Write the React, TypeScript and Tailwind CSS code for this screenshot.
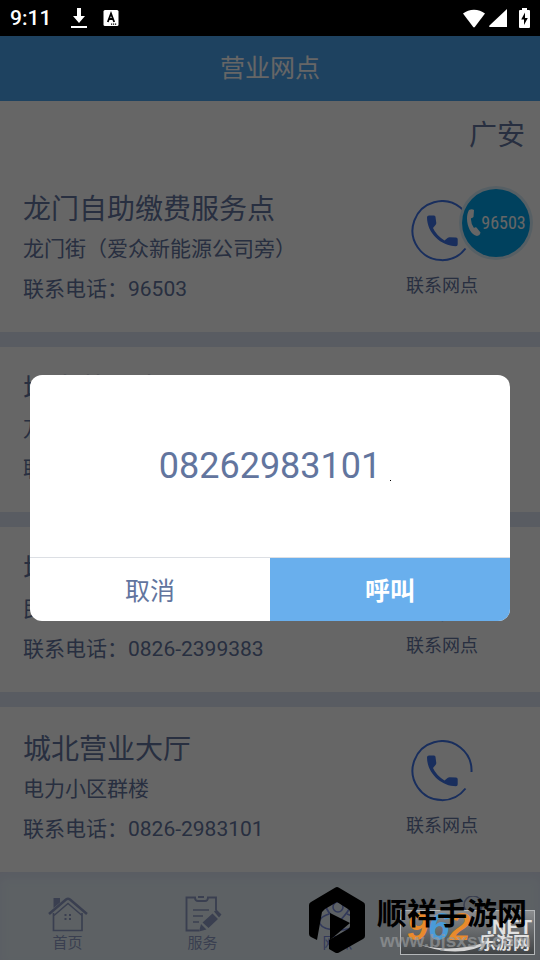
import { useState } from "react";

interface Branch {
  name: string;
  address: string;
  phone: string;
}

const branches: Branch[] = [
  { name: "龙门自助缴费服务点", address: "龙门街（爱众新能源公司旁）", phone: "96503" },
  { name: "城南营业大厅", address: "万盛街", phone: "0826-2983101" },
  { name: "城东营业大厅", address: "民安街", phone: "0826-2399383" },
  { name: "城北营业大厅", address: "电力小区群楼", phone: "0826-2983101" },
];

const StatusBar = () => (
  <div className="flex h-9 shrink-0 items-center bg-black px-[10px] text-white">
    <span className="text-[21px] leading-6 font-medium">9:11</span>
    <svg className="ml-5 h-5 w-4" viewBox="0 0 16 20" fill="currentColor">
      <path d="M6 0h4v8h4l-6 7-6-7h4zM0 18h16v2H0z" />
    </svg>
    <svg className="ml-4 h-4 w-4" viewBox="0 0 16 16">
      <rect x="0.5" y="0" width="15" height="16" rx="1.5" fill="#fff" />
      <path
        d="M4.8 12L8 3.5l3.2 8.5M6 9h4"
        stroke="#000"
        strokeWidth="1.8"
        fill="none"
      />
      <path d="M8 13.5h1.2v1.2H8zM10 13.5h1.2v1.2H10zM12 13.5h1.2v1.2H12z" />
    </svg>
    <div className="ml-auto flex items-center">
      <svg className="h-[19px] w-[22px]" viewBox="0 0 22 19" fill="currentColor">
        <path d="M0 4.5C6-.6 16-.6 22 4.5L11.800 18q-.8.900-1.600 0z" />
      </svg>
      <svg className="ml-1 h-[18px] w-[18px]" viewBox="0 0 18 18" fill="currentColor">
        <path d="M18 0v18H1q-1.500-.2-.5-1.500z" />
      </svg>
      <svg className="ml-3 h-5 w-[11px]" viewBox="0 0 11 20">
        <path
          d="M3 0h5v2h2q1 0 1 1v16q0 1-1 1H1q-1 0-1-1V3q0-1 1-1h2z"
          fill="#fff"
        />
        <path d="M6 4.500L2.200 11.500H5V17l3.800-7H6z" />
      </svg>
    </div>
  </div>
);

const PhoneRing = () => (
  <svg className="h-[62px] w-[62px]" viewBox="0 0 62 62" fill="none">
    <path
      d="M60.500 32A29.500 29.500 0 1 0 54.500 48.500"
      stroke="#3f74e8"
      strokeWidth="2"
    />
    <path
      d="M18 15.500h5q1.500 0 1.500 1.500l.8 6q0 1-.8 2l-2.500 3q3 7 11.500 12.500l3-2.500q1-.8 2-.8l6.500 .3q1.700 0 1.700 1.700v5q0 2-1.800 2C30 46.200 16 33 16 17.300q0-1.800 2-1.800z"
      fill="#3f74e8"
    />
  </svg>
);

const BranchCard = ({ branch }: { branch: Branch }) => (
  <li className="flex h-[165px] items-start justify-between bg-white pr-[62px] pl-[23px]">
    <div className="pt-6">
      <h2 className="text-[28px] leading-[38px]">{branch.name}</h2>
      <p className="text-[21px] leading-10">{branch.address}</p>
      <p className="text-[21px] leading-10">联系电话：{branch.phone}</p>
    </div>
    <button type="button" className="flex flex-col items-center pt-[33px]">
      <PhoneRing />
      <span className="mt-2 text-[18px] leading-8">联系网点</span>
    </button>
  </li>
);

const HomeIcon = () => (
  <svg className="h-9 w-10" viewBox="0 0 40 36" fill="none" stroke="currentColor">
    <path d="M1 18L18 3.500Q20 2 22 3.500L39 18" strokeWidth="2.600" />
    <path d="M5.500 17v17.500h28.500V17" strokeWidth="1.700" />
    <path d="M6 19.500L20 7.500l14 12" strokeWidth="1.500" />
    <path d="M5.500 2h6.500v4.500l-6.500 5.500z" fill="currentColor" stroke="none" />
    <path d="M16.500 18h2v2h-2zM21 18h2v2h-2zM16.500 22h2v2h-2zM21 22h2v2h-2z" fill="currentColor" stroke="none" />
  </svg>
);

const ServiceIcon = () => (
  <svg className="h-9 w-10" viewBox="0 0 40 36" fill="none" stroke="currentColor">
    <path
      d="M33 14V1.500h-8q0 3.500-3 3.500h-7q-3 0-3-3.500H3.500v33H16"
      strokeWidth="1.900"
    />
    <path d="M15 1h6" strokeWidth="2" />
    <path d="M10 14h16M10 20h10M10 26h6" strokeWidth="1.700" />
    <path
      d="M29.500 17.500l5.500 5.500-9.500 9-6-5.500zM31 15.500l2.500-2 5 5-2.500 3zM18 28l5.500 5.500-7.500 2z"
      fill="currentColor"
      stroke="none"
    />
  </svg>
);

const BranchIcon = () => (
  <svg className="h-9 w-10" viewBox="0 0 40 36" fill="none" stroke="currentColor" strokeWidth="1.600">
    <path d="M20 27C12 18 8 14 8 10q1-7 12-7t12 7c0 4-4 8-12 17z" />
    <circle cx="20" cy="11" r="5" />
    <path d="M11 18C-5 23 0 34 20 34s25-11 9-16" />
  </svg>
);

const MineIcon = () => (
  <svg className="h-9 w-10" viewBox="0 0 40 36" fill="none" stroke="currentColor" strokeWidth="1.600">
    <circle cx="20" cy="9" r="9" />
    <path d="M4 35q0-15 16-15t16 15z" />
  </svg>
);

const tabs = [
  { label: "首页", Icon: HomeIcon, active: false },
  { label: "服务", Icon: ServiceIcon, active: false },
  { label: "网点", Icon: BranchIcon, active: true },
  { label: "我的", Icon: MineIcon, active: false },
];

const TabBar = () => (
  <nav className="flex flex-1 bg-[#e8f3fb] shadow-[inset_0_6px_10px_#dfe6f6]">
    {tabs.map(({ label, Icon, active }) => (
      <a
        key={label}
        href="#"
        className={
          active
            ? "flex flex-1 flex-col items-center pt-6 text-[#7d8fe0]"
            : "flex flex-1 flex-col items-center pt-6 text-[#929fc8]"
        }
      >
        <Icon />
        <span className="text-[15px] leading-[22px]">{label}</span>
      </a>
    ))}
  </nav>
);

const HotlineButton = () => (
  <button
    type="button"
    aria-label="96503"
    className="absolute top-[189px] right-[10px] flex size-[68px] items-center justify-center rounded-full bg-[#00a4ea] text-white shadow-[0_0_0_3px_#d8eefa]"
  >
    <svg className="h-7 w-[15px]" viewBox="0 0 15 28" fill="currentColor">
      <path d="M3 1q3-1.500 5 0l-.5 7q-1.500 1.500-2.500 1-.5 5 3 10 1-1 2.500-.5l4 5q-.5 3-3.500 3.500C3 26-2 10 3 1z" />
    </svg>
    <span className="font-['Liberation_Sans_Narrow','Roboto_Condensed',Roboto,sans-serif] text-[18px] leading-6">
      96503
    </span>
  </button>
);

const CallDialog = ({ phone, onClose }: { phone: string; onClose: () => void }) => (
  <div className="absolute inset-x-0 top-9 bottom-0 bg-black/60 px-[30px] pt-[339px]">
    <div
      role="dialog"
      aria-label={phone}
      className="relative overflow-hidden rounded-xl bg-white text-[#62759e]"
    >
      <div className="flex h-[182px] items-center justify-center">
        <p className="text-[36px] leading-10">{phone}</p>
        <i className="absolute top-[105px] left-3/4 size-px bg-black" />
      </div>
      <div className="flex h-16 border-t border-[#dcdfe4] text-[25px]">
        <button type="button" className="flex-1 pt-1" onClick={onClose}>
          取消
        </button>
        <button
          type="button"
          className="flex-1 bg-[#69afed] pt-1 font-bold text-white"
          onClick={onClose}
        >
          呼叫
        </button>
      </div>
    </div>
  </div>
);

const Watermark = () => (
  <div className="pointer-events-none absolute right-[5px] bottom-[5px] h-[68px] w-[226px]">
    <div className="absolute right-0 bottom-0 h-[45px] w-[135px] border border-[#b4b7b9] bg-gradient-to-b from-[#8b8d8f] to-[#414446]">
      <svg className="absolute bottom-0 left-3 h-3 w-20" viewBox="0 0 80 12">
        <path d="M0 0q34 14 80-2-32 22-80 2z" fill="#d5d5d5" />
      </svg>
      <span className="absolute -top-0.5 left-1.5 font-['Liberation_Sans',sans-serif] text-[38px] leading-9 font-bold text-[#e98a2c] italic">
        9<span className="text-[#4a9bd8]">6</span>2
      </span>
      <span className="absolute top-1.5 right-0.5 font-['Liberation_Sans',sans-serif] text-[20px] leading-5 font-bold text-[#e2e2e2]">
        .NET
      </span>
      <span className="absolute right-1 bottom-0.5 text-[17px] leading-[18px] font-bold text-[#e2e2e2]">
        乐游网
      </span>
    </div>
    <svg className="absolute top-0 left-0 h-[66px] w-14" viewBox="0 0 56 66">
      <path
        d="M28 0q1 0 2 .7L54 15q2 1 2 3v31q0 2-2 3L30 65.500q-2 1-4 0L20 62V53l19-11q2-1 2-3V25q0-2-2-3L28 15l-12 7-3 3L8 53 2 50q-2-1-2-3V18q0-2 2-3L26 .7Q27 0 28 0z"
      />
      <path d="M21 26l20 10-20 17z" />
    </svg>
    <p className="absolute right-1 bottom-0.5 font-['Liberation_Sans',sans-serif] text-[19px] leading-6 font-bold text-[#96999b]/70">
      www.bjsxsy.com
    </p>
    <p className="absolute top-1 right-2 text-[30px] leading-[46px] font-bold text-black">
      顺祥手游网
    </p>
  </div>
);

export default function App() {
  const [phone, setPhone] = useState("08262983101");

  return (
    <div className="relative flex min-h-screen flex-col overflow-hidden bg-white font-[Roboto,'Noto_Sans_CJK_SC',sans-serif] text-[#6475a0]">
      <StatusBar />
      <header className="flex h-[65px] items-center justify-center bg-[#4da5f0] text-white">
        <h1 className="text-[25px]">营业网点</h1>
      </header>
      <div className="flex h-[66px] items-center justify-end px-[15px] pt-1">
        <span className="text-[28px]">广安</span>
      </div>
      <ul className="flex flex-col gap-[15px] bg-[#dfe5f5]">
        {branches.map((branch) => (
          <BranchCard key={branch.name} branch={branch} />
        ))}
      </ul>
      <TabBar />
      <HotlineButton />
      {phone && <CallDialog phone={phone} onClose={() => setPhone("")} />}
      <Watermark />
    </div>
  );
}
